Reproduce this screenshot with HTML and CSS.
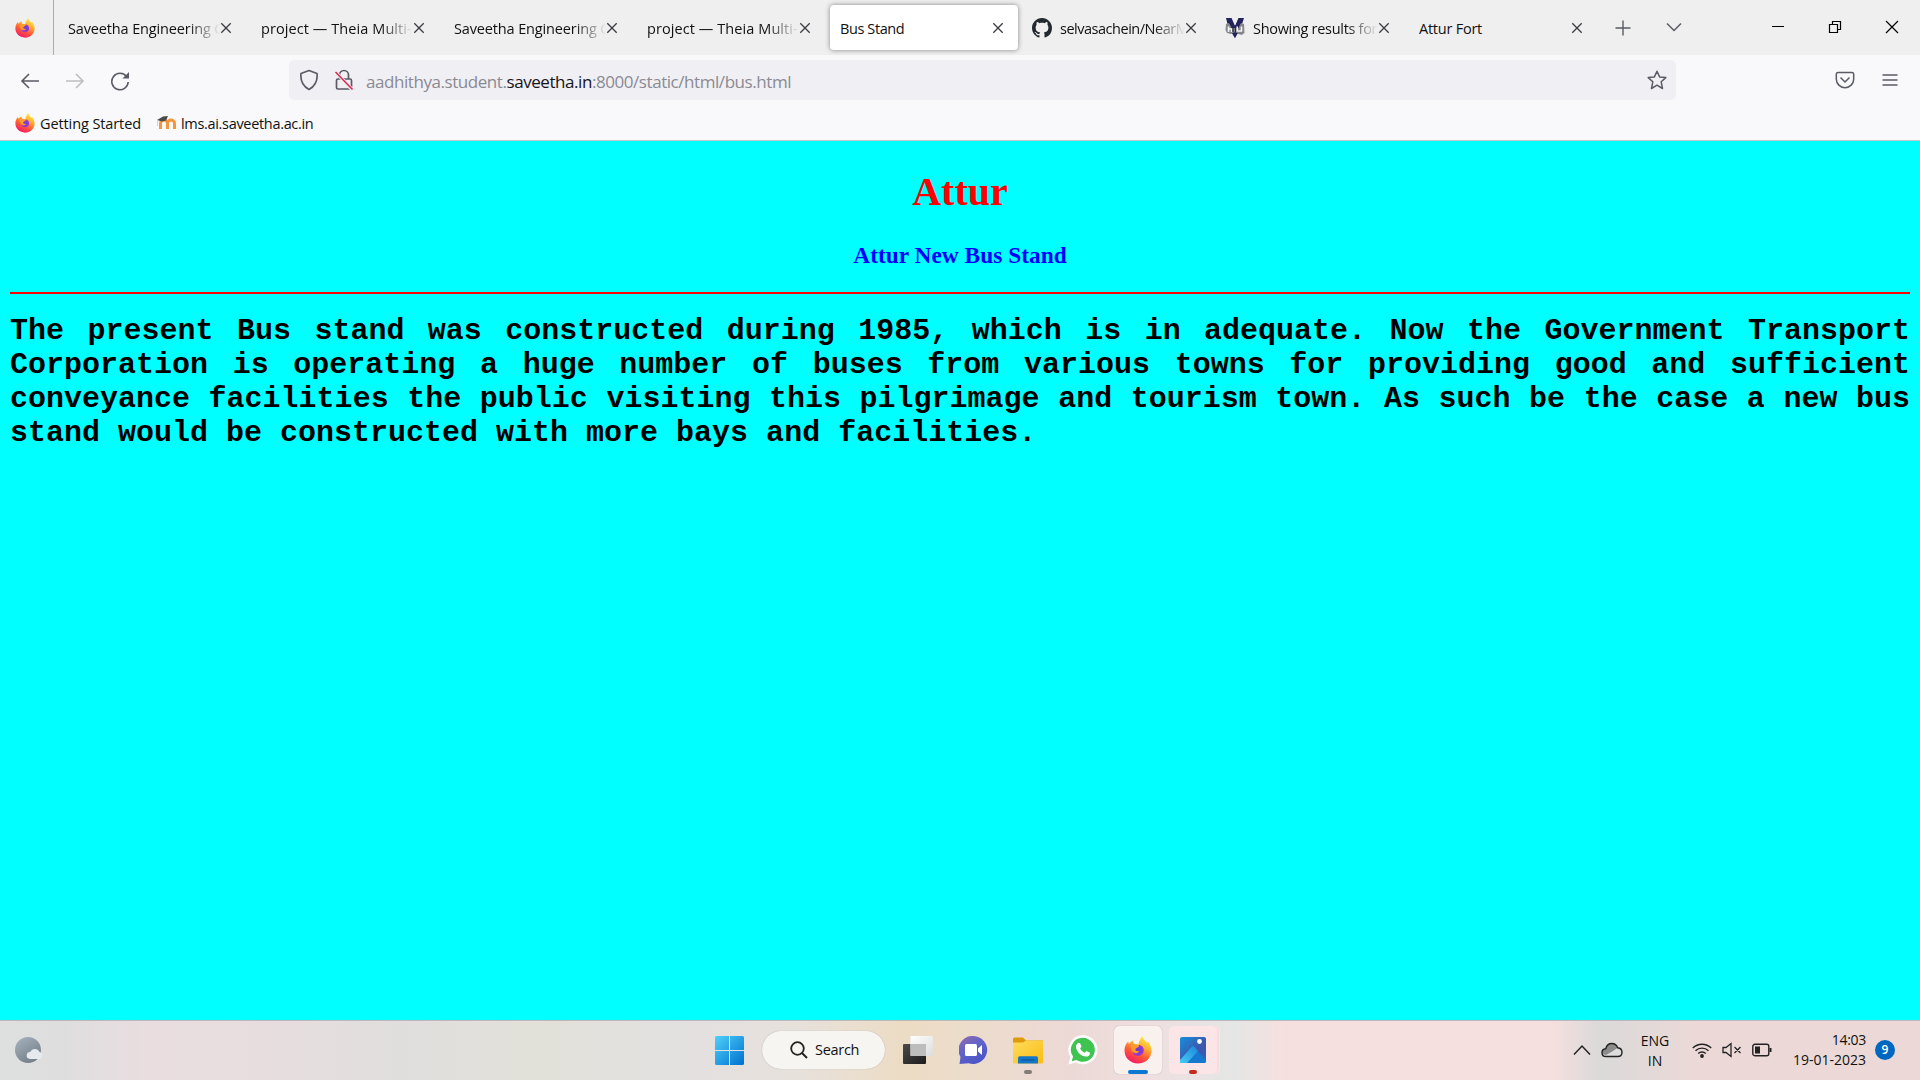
FILE: index.html
```
<!DOCTYPE html>
<html lang="en">
<head>
<meta charset="utf-8">
<title>Bus Stand</title>
<link rel="stylesheet" href="styles.css">
</head>
<body>
<svg class="defs" width="0" height="0" aria-hidden="true">
  <defs>
    <linearGradient id="flame" x1=".8" y1="0" x2=".3" y2="1"><stop offset="0" stop-color="#fff44f"/><stop offset=".35" stop-color="#ffb02e"/><stop offset=".65" stop-color="#ff5a36"/><stop offset="1" stop-color="#f5156c"/></linearGradient>
    <radialGradient id="globe"><stop offset="0" stop-color="#5b3fd6"/><stop offset="1" stop-color="#a336d0"/></radialGradient>
    <linearGradient id="win" x1="0" y1="0" x2="1" y2="1"><stop offset="0" stop-color="#4fd0fa"/><stop offset="1" stop-color="#0070d0"/></linearGradient>
    <linearGradient id="dark" x1="0" y1="0" x2="1" y2="1"><stop offset="0" stop-color="#4a4a4a"/><stop offset="1" stop-color="#1c1c1c"/></linearGradient>
    <linearGradient id="light" x1="0" y1="0" x2="1" y2="1"><stop offset="0" stop-color="#fff"/><stop offset="1" stop-color="#dcdcdc"/></linearGradient>
    <linearGradient id="chat" x1="0" y1="0" x2=".6" y2="1"><stop offset="0" stop-color="#9a6aa8"/><stop offset=".45" stop-color="#6264c8"/><stop offset="1" stop-color="#4c56c6"/></linearGradient>
    <linearGradient id="folder" x1="0" y1="0" x2="1" y2="1"><stop offset="0" stop-color="#ffdc5c"/><stop offset="1" stop-color="#fbbc14"/></linearGradient>
    <linearGradient id="photo" x1="0" y1="0" x2="1" y2="1"><stop offset="0" stop-color="#1390dc"/><stop offset=".6" stop-color="#3f55ac"/><stop offset="1" stop-color="#2e63be"/></linearGradient>
    <linearGradient id="peak" x1="0" y1="1" x2="1" y2="0"><stop offset="0" stop-color="#46cdf2"/><stop offset="1" stop-color="#1c86dc"/></linearGradient>
    <linearGradient id="moon" x1="0" y1="0" x2=".6" y2="1"><stop offset="0" stop-color="#a7b3be"/><stop offset="1" stop-color="#75808a"/></linearGradient>
    <symbol id="firefox" viewBox="0 0 28 28">
      <path fill="url(#flame)" d="M14 27.5C6.500 27.500.500 22 .5 14.500.5 10.500 2 7.500 4.200 5.500L4.800 8C6 6.500 7.500 5 9.500 4.400c-.6 1.200-.3 2.600.8 3.600l4.200.6C15 5 16.500 2 18.800.3c.2 3 2.400 4.200 4.400 6.500L24 5.500c2 2.500 3.600 6 3.500 9.500-.3 7-6 12.500-13.500 12.500z"/>
      <path fill="url(#globe)" d="M14.500 9c3.500 0 5.500 2.600 5.300 5.600-.2 3.400-2.700 5.400-5.800 5.400s-5.600-2.200-5.600-5.200c0-1 .2-1.800.6-2.600l4-.3 2.200-2z"/>
      <path fill="#ff9a2b" d="M6.500 9.500c2.500-1.800 6-.8 8.500-.2-.4 1.800-3.200 2-3.600 3.700-.3 1.500 1.400 2.800 4.100 1.900-1.300 3-6 3-7.600.2-.9-1.800-.9-3.600-1.400-5.600z"/>
    </symbol>
    <symbol id="close" viewBox="0 0 12 12"><path d="M1.300 1.300l9.400 9.400M10.700 1.300L1.300 10.700" fill="none" stroke="#3c3c40" stroke-width="1.300"/></symbol>
  </defs>
</svg>

<header class="browser">
  <div class="tabstrip">
    <div class="pinned"><svg width="20" height="20"><use href="#firefox"/></svg></div>
    <div class="tabs">
      <div class="tab"><span class="label t-sav">Saveetha Engineering C</span><svg class="x" width="12" height="12"><use href="#close"/></svg></div>
      <div class="tab"><span class="label t-pro">project — Theia Multi-</span><svg class="x" width="12" height="12"><use href="#close"/></svg></div>
      <div class="tab"><span class="label t-sav">Saveetha Engineering C</span><svg class="x" width="12" height="12"><use href="#close"/></svg></div>
      <div class="tab"><span class="label t-pro">project — Theia Multi-</span><svg class="x" width="12" height="12"><use href="#close"/></svg></div>
      <div class="tab active"><span class="label t-bus">Bus Stand</span><svg class="x" width="12" height="12"><use href="#close"/></svg></div>
      <div class="tab">
        <svg class="fav" width="20" height="20" viewBox="0 0 16 16"><path fill="#24292f" d="M8 0C3.580 0 0 3.580 0 8c0 3.540 2.290 6.530 5.470 7.590.4.070.55-.17.55-.38 0-.19-.01-.82-.01-1.490-2.010.37-2.530-.49-2.690-.94-.09-.23-.48-.94-.82-1.130-.28-.15-.68-.52-.01-.53.63-.01 1.080.58 1.230.82.72 1.210 1.870.87 2.330.66.07-.52.28-.87.51-1.070-1.780-.2-3.640-.89-3.640-3.950 0-.87.31-1.590.82-2.150-.08-.2-.36-1.020.08-2.120 0 0 .67-.21 2.200.82.64-.18 1.320-.27 2-.27s1.360.09 2 .27c1.530-1.040 2.200-.82 2.200-.82.44 1.100.16 1.920.08 2.120.51.56.82 1.270.82 2.150 0 3.070-1.870 3.750-3.650 3.950.29.25.54.73.54 1.480 0 1.070-.01 1.930-.01 2.200 0 .21.15.46.55.38A8.010 8.010 0 0 0 16 8c0-4.420-3.580-8-8-8z"/></svg>
        <span class="label t-sel">selvasachein/NearM</span><svg class="x" width="12" height="12"><use href="#close"/></svg></div>
      <div class="tab">
        <svg class="fav" width="20" height="20" viewBox="0 0 20 20"><path fill="#23235f" d="M1 0h5l4 9 4-9h5l-4 12-3 3-2 5-3-5-3-3z"/><path fill="#85868c" d="M1 6l3-1 2 3 4-1 4 1 2-3 3 1 .5 9-3 2-3-1-3.500-2L6 16l-4-1-1.500-3z"/><path fill="#23235f" d="M2 0h4.500l3.500 8 3.500-8H18l-4.500 10h-7z"/><path d="M3.500 14V8.500m0 2.500h3V14M12.200 8.500V13h4.300V8.500" fill="none" stroke="#f5f5f5" stroke-width="1.600"/><path d="M8 8.500V14M10.500 8.500V14" stroke="#292a45" stroke-width="1.200"/><path fill="#23235f" d="M7 15h6l-3 5z"/></svg>
        <span class="label t-sho">Showing results for</span><svg class="x" width="12" height="12"><use href="#close"/></svg></div>
      <div class="tab"><span class="label t-att">Attur Fort</span><svg class="x" width="12" height="12"><use href="#close"/></svg></div>
    </div>
    <div class="tabtools">
      <svg width="16" height="16" viewBox="0 0 16 16"><path d="M8 .5v15M.5 8h15" stroke="#5b5b66" stroke-width="1.400"/></svg>
      <svg width="16" height="16" viewBox="0 0 16 16"><path d="M1 3.500l7 7 7-7" fill="none" stroke="#5b5b66" stroke-width="1.500"/></svg>
    </div>
    <div class="winbuttons">
      <svg width="14" height="14" viewBox="0 0 14 14"><path d="M1 6.500h12" stroke="#000"/></svg>
      <svg width="14" height="14" viewBox="0 0 14 14"><path d="M1.500 4.500h8v8h-8zM4.500 4V1.500h8v8H10" fill="none" stroke="#000" stroke-width="1.200"/></svg>
      <svg width="14" height="14" viewBox="0 0 14 14"><path d="M1 1l12 12M13 1L1 13" stroke="#000" stroke-width="1.200"/></svg>
    </div>
  </div>

  <div class="toolbar">
    <div class="nav">
      <svg width="20" height="20" viewBox="0 0 20 20"><path d="M19 10H2M9 3l-7 7 7 7" fill="none" stroke="#5b5b66" stroke-width="1.600"/></svg>
      <svg width="20" height="20" viewBox="0 0 20 20"><path d="M1 10h17M11 3l7 7-7 7" fill="none" stroke="#bdbdc4" stroke-width="1.600"/></svg>
      <svg width="20" height="20" viewBox="0 0 20 20"><path d="M16.500 5.500A8.200 8.200 0 1 0 18.200 11" fill="none" stroke="#5b5b66" stroke-width="1.600"/><path d="M19 1v6.500h-6.500z" fill="#5b5b66"/></svg>
    </div>
    <div class="urlbar">
      <svg width="20" height="22" viewBox="0 0 20 22"><path d="M10 1.500l8 3c.8 7-1.800 12.500-8 16-6.200-3.500-8.800-9-8-16z" fill="none" stroke="#5b5b66" stroke-width="1.700" stroke-linejoin="round"/></svg>
      <svg width="20" height="22" viewBox="0 0 20 22"><path d="M5.500 10V6a4.500 4.500 0 0 1 9 0v4M4 10h12a1.500 1.500 0 0 1 1.500 1.500v7A1.500 1.500 0 0 1 16 20H4a1.500 1.500 0 0 1-1.500-1.500v-7A1.500 1.500 0 0 1 4 10z" fill="none" stroke="#5b5b66" stroke-width="1.700"/><path d="M2 3.500l16 17" stroke="#f0eff4" stroke-width="3.500"/><path d="M1.500 3l17 17.500" stroke="#e22850" stroke-width="1.600"/></svg>
      <span class="url">aadhithya.student.<b>saveetha.in</b>:8000/static/html/bus.html</span>
      <svg width="20" height="20" viewBox="0 0 20 20"><path d="M10 1.200l2.600 5.700 6.200.7-4.600 4.200 1.300 6.700L10 15.200l-5.500 3.300 1.300-6.700L1.200 7.600l6.200-.7z" fill="none" stroke="#5b5b66" stroke-width="1.500" stroke-linejoin="round"/></svg>
    </div>
    <div class="menus">
      <svg width="20" height="18" viewBox="0 0 20 18"><path d="M3 1.500h14A1.700 1.700 0 0 1 18.700 3v5a8.700 8.700 0 0 1-17.400 0V3A1.700 1.700 0 0 1 3 1.500zM5.500 6.500L10 11l4.500-4.500" fill="none" stroke="#5b5b66" stroke-width="1.500"/></svg>
      <svg width="16" height="14" viewBox="0 0 16 14"><path d="M.5 2h15M.5 7h15M.5 12h15" stroke="#5b5b66" stroke-width="1.400"/></svg>
    </div>
  </div>

  <div class="bookmarks">
    <svg width="20" height="20"><use href="#firefox"/></svg><span class="b-get">Getting Started</span>
    <svg class="moodle" width="20" height="16" viewBox="0 0 20 16"><path d="M4.500 14V8.500a3.500 3.500 0 0 1 7 0V14M11.500 8.500a3.500 3.500 0 0 1 7 0V14" fill="none" stroke="#f7953a" stroke-width="3"/><path d="M1 5L7 1.500l5-.5-2 4.500-4 1z" fill="#4b4b4b"/><path d="M1.500 5v6" stroke="#f3c9a4"/></svg><span class="b-lms">lms.ai.saveetha.ac.in</span>
  </div>
</header>

<main class="page">
  <h1>Attur</h1>
  <h3>Attur New Bus Stand</h3>
  <hr>
  <p>The present Bus stand was constructed during 1985, which is in adequate. Now the Government Transport Corporation is operating a huge number of buses from various towns for providing good and sufficient conveyance facilities the public visiting this pilgrimage and tourism town. As such be the case a new bus stand would be constructed with more bays and facilities.</p>
</main>

<footer class="taskbar">
  <div class="weather">
    <svg width="28" height="26" viewBox="0 0 28 26"><circle cx="13" cy="13" r="13" fill="url(#moon)"/><path d="M15 22a3.500 3.500 0 0 1 .3-7 5 5 0 0 1 9.200 0 3.600 3.600 0 0 1 .2 7z" fill="#e6eaee"/></svg>
  </div>
  <div class="apps">
    <svg class="start" width="29" height="29" viewBox="0 0 29 29"><path fill="url(#win)" d="M1.500 0H14v14H0V1.500A1.500 1.500 0 0 1 1.500 0zM15 0h12.500A1.500 1.500 0 0 1 29 1.500V14H15zM0 15h14v14H1.500A1.500 1.500 0 0 1 0 27.500zM15 15h14v12.500a1.500 1.500 0 0 1-1.500 1.500H15z"/></svg>
    <div class="search"><svg width="18" height="18" viewBox="0 0 18 18"><circle cx="7.500" cy="7.500" r="6.300" fill="none" stroke="#222" stroke-width="1.800"/><path d="M12 12l5 5" stroke="#222" stroke-width="2"/></svg><span>Search</span></div>
    <div class="app"><svg width="30" height="28" viewBox="0 0 30 28"><rect y="8" width="23" height="20" rx="1" fill="url(#dark)"/><rect x="7.500" width="22.500" height="20" rx="1" fill="url(#light)"/><path d="M7.500 8H23v12H7.500z" fill="#bdbdbd"/></svg></div>
    <div class="app"><svg width="29" height="28" viewBox="0 0 29 28"><path fill="url(#chat)" d="M14.500 0a14 14 0 1 1-5 27.200L.5 28l1-7A14 14 0 0 1 14.500 0z"/><rect x="6" y="8" width="12" height="12" rx="1.500" fill="#fff"/><path d="M19 12.500l4-3.500v10l-4-3.500z" fill="#fff"/></svg></div>
    <div class="app"><svg width="30" height="27" viewBox="0 0 30 27"><path fill="#df9a0c" d="M0 2a1.500 1.500 0 0 1 1.500-1.500H10L13 3.500h17V12H0z"/><path fill="url(#folder)" d="M0 5.500h10l3-2h17V25a1.500 1.500 0 0 1-1.500 1.500h-27A1.500 1.500 0 0 1 0 25z"/><path fill="#1477c8" d="M5 26.500V21a1.800 1.800 0 0 1 1.800-1.800h16.400A1.800 1.800 0 0 1 25 21v5.500z"/><path d="M8.500 23h13" stroke="#0b4f91"/></svg><i class="dot grey"></i></div>
    <div class="app"><svg width="30" height="30" viewBox="0 0 30 30"><path fill="#fff" d="M15 .3A14.500 14.500 0 1 1 8 27.500L.3 29.500l2.200-7.200A14.500 14.500 0 0 1 15 .3z"/><path fill="#3fc351" d="M15 2.800A12 12 0 1 1 8.500 25l-4.700 1.200L5 21.600A12 12 0 0 1 15 2.800z"/><path fill="#fff" d="M10 8h2l1.500 3.600-1.300 1.800c1 2 2.400 3.400 4.500 4.400l1.700-1.700L22 17.700c.2 2.500-1.600 4-4 3.900-5-.4-9.700-5.200-10-9.700C8 10 8.900 8.700 10 8z"/></svg></div>
    <div class="app running"><svg width="28" height="28"><use href="#firefox"/></svg><i class="dot blue"></i></div>
    <div class="app alert"><svg width="26" height="26" viewBox="0 0 26 26"><rect width="26" height="26" rx="2" fill="url(#photo)"/><path d="M1 23L11.500 10.500a2 2 0 0 1 3 0L26 23v1a2 2 0 0 1-2 2H2a2 2 0 0 1-1-3z" fill="#1679d0"/><path d="M1 22L11.500 10a2 2 0 0 1 3 0l3.500 4L7 26H2a2 2 0 0 1-1-4z" fill="url(#peak)"/><circle cx="19.500" cy="4.500" r="2.400" fill="#fff"/></svg><i class="dot red"></i></div>
  </div>
  <div class="tray">
    <svg width="18" height="12" viewBox="0 0 18 12"><path d="M1 10.500L9 2l8 8.500" fill="none" stroke="#222" stroke-width="1.500"/></svg>
    <svg class="cloud" width="22" height="16" viewBox="0 0 22 16"><path d="M5 14.500C2.500 14.500 1 13 1 10.700 1 8.500 2.500 7 4.700 6.800 5.500 3.500 8 1.500 10.800 1.500c2.700 0 5 1.600 5.800 4.200C19.300 6 21 7.800 21 10.200c0 2.500-1.700 4.300-4.200 4.300z" fill="#ddd"/><path d="M4.700 6.800C5.500 3.500 8 1.500 10.800 1.500c2.700 0 5 1.600 5.800 4.200L12 9l-7 4-3.500-1C.5 9 2 7 4.700 6.800z" fill="#8b8b8b"/><path d="M5 14.500C2.500 14.500 1 13 1 10.700 1 8.500 2.500 7 4.700 6.800 5.500 3.500 8 1.500 10.800 1.500c2.700 0 5 1.600 5.800 4.200C19.300 6 21 7.800 21 10.200c0 2.500-1.700 4.300-4.200 4.300z" fill="none" stroke="#222" stroke-width="1.400"/></svg>
    <div class="lang">ENG<br>IN</div>
    <svg class="wifi" width="20" height="16" viewBox="0 0 20 16"><path d="M.8 6a13 13 0 0 1 18.400 0M3.500 8.800a9.200 9.200 0 0 1 13 0M6.200 11.500a5.400 5.400 0 0 1 7.600 0" fill="none" stroke="#222" stroke-width="1.400"/><circle cx="10" cy="14" r="1.900" fill="#222"/></svg>
    <svg class="speaker" width="20" height="16" viewBox="0 0 20 16"><path d="M1 5.500h3L9 1.500v13l-5-4H1zM12.500 5l6 6M18.500 5l-6 6" fill="none" stroke="#222" stroke-width="1.300"/></svg>
    <svg class="battery" width="20" height="14" viewBox="0 0 20 14"><rect x=".8" y="1.300" width="16" height="11.400" rx="2" fill="none" stroke="#222" stroke-width="1.400"/><rect x="3" y="3.500" width="5" height="7" fill="#222"/><path d="M17.500 5h2v4h-2z" fill="#222"/></svg>
    <div class="clock"><span class="time">14:03</span><span>19-01-2023</span></div>
    <span class="badge">9</span>
  </div>
</footer>
</body>
</html>
```
FILE: styles.css
```
* { box-sizing: border-box; }
html, body { height: 100%; }
body {
  margin: 0;
  display: flex;
  flex-direction: column;
  overflow: hidden;
  font: 14.5px/20px "Open Sans", "Noto Sans", sans-serif;
  color: #111;
}
svg { display: block; flex: none; }
.defs { position: absolute; }

.browser { height: 141px; flex: none; background: #f9f9fb; border-bottom: 1px solid #c5c5c9; }
.tabstrip { height: 55px; display: flex; background: #efefef; }
.pinned { width: 54px; display: flex; align-items: center; padding-left: 15px; border-right: 1px solid #acacae; }
.tabs { display: flex; gap: 5px; padding: 5px 0 5px 4px; }
.tab { width: 188px; height: 45px; display: flex; align-items: center; padding: 0 14px 0 10px; border-radius: 4px; }
.tab.active { background: #fff; box-shadow: 0 0 5px rgba(0, 0, 0, .45); }
.label {
  flex: 1;
  min-width: 0;
  overflow: hidden;
  white-space: nowrap;
  padding-top: 2px;
  mask-image: linear-gradient(to left, transparent 0, #000 32px);
}
.t-bus, .t-att { mask-image: none; }
.fav { margin: 0 8px 0 -1px; }
.t-sav { letter-spacing: -.14px; }
.t-pro { letter-spacing: .08px; }
.t-bus { letter-spacing: -.4px; }
.t-sel { letter-spacing: -.48px; }
.t-sho { letter-spacing: -.3px; }
.t-att { letter-spacing: -.24px; }
.tabtools { display: flex; align-items: center; gap: 35px; padding-left: 18px; }
.winbuttons { display: flex; align-items: center; gap: 43px; margin-left: auto; padding: 0 21px 1px 0; }

.toolbar { height: 50px; display: flex; align-items: center; }
.nav { width: 289px; display: flex; gap: 25px; padding: 1px 0 0 20px; }
.urlbar { width: 1387px; height: 40px; display: flex; align-items: center; padding: 0 9px 0 10px; border-radius: 5px; background: #f0eff4; }
.urlbar svg + svg { margin-left: 15px; }
.url { flex: 1; margin-left: 12px; padding-top: 4px; font-size: 17px; letter-spacing: -.44px; color: #8a8a92; white-space: nowrap; }
.url b { font-weight: 400; color: #15141a; }
.menus { display: flex; align-items: center; gap: 27px; margin-left: auto; padding-right: 22px; }
.bookmarks { height: 35px; display: flex; align-items: center; padding: 0 0 0 15px; }
.bookmarks span { margin-left: 5px; padding-top: 3px; }
.bookmarks .moodle { margin-left: 15px; }
.b-get { letter-spacing: -.1px; }
.b-lms { letter-spacing: -.32px; }

.page { flex: 1; background: #0ff; padding: 0 10px; overflow: hidden; }
.page h1, .page h3 { font-family: "Liberation Serif", "Times New Roman", serif; text-align: center; }
.page h1 { margin: 28px 0 0; font-size: 40px; line-height: 46px; color: #f00; }
.page h3 { margin: 27px 0 0; font-size: 23.4px; line-height: 27px; color: #00f; }
.page hr { margin: 23px 0 0; border: 0; height: 2px; background: #f00; }
.page p { margin: 20px 0 0; font: bold 30px/34px "Liberation Mono", "Courier New", monospace; text-align: justify; color: #000; }

.taskbar {
  height: 60px;
  flex: none;
  display: flex;
  align-items: center;
  box-shadow: inset 0 1px #c0b5b8;
  background: linear-gradient(90deg, #dedfdf 0, #dedede 60px, #e9dde0 150px, #e7ddde 260px, #e0dedd 400px, #e1e1d9 540px, #e3e0e0 680px, #e7e1db 800px, #ecdcc5 900px, #ecdccb 970px, #ecd9d6 1070px, #efdfe0 1150px, #e4e6e5 1235px, #f6e0df 1285px, #f6e0df 1550px, #dbd9d9 1600px, #ecd9d7 1700px, #ecd9d7 1920px);
}
.weather { width: 714px; padding-left: 15px; }
.apps { display: flex; align-items: center; height: 60px; }
.start { margin: 1px 18px 0 1px; }
.search { width: 123px; height: 38px; display: flex; align-items: center; gap: 7px; padding-left: 28px; margin-right: 9px; border-radius: 19px; background: #f7f5f2; box-shadow: 0 0 1px rgba(0, 0, 0, .3); letter-spacing: -.3px; }
.app { position: relative; width: 48px; height: 48px; display: flex; align-items: center; justify-content: center; margin: 0 7px 0 0; border-radius: 5px; }
.app.running { background: #f8f1ee; box-shadow: 0 0 1px rgba(0, 0, 0, .3); }
.app.alert { background: #fce5e7; box-shadow: 2px 0 #f3dde0, 3px 0 #fce5e7; }
.dot { position: absolute; bottom: 0; left: 50%; width: 8px; height: 4px; margin-left: -4px; border-radius: 2px; }
.grey { background: #857c78; }
.blue { width: 20px; margin-left: -10px; background: #0b78d4; }
.red { background: #c42b1c; }
.tray { display: flex; align-items: center; margin-left: auto; padding-right: 25px; }
.cloud { margin-left: 10px; }
.lang { width: 34px; margin-left: 15px; font-size: 14px; text-align: center; padding-top: 1px; }
.wifi { margin-left: 20px; }
.speaker { margin-left: 10px; }
.battery { margin-left: 10px; }
.clock { width: 74px; margin-left: 20px; display: flex; flex-direction: column; align-items: flex-end; font-size: 14px; }
.time { letter-spacing: -.3px; }
.badge { width: 20px; height: 20px; margin-left: 9px; border-radius: 50%; background: #0067c0; color: #fff; font-size: 12px; font-weight: 600; line-height: 20px; text-align: center; }
```
